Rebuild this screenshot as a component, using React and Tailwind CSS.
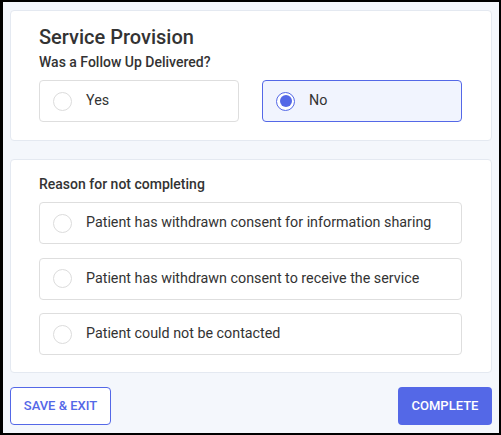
import React from "react";

function Radio({ checked }) {
  return checked ? (
    <span className="flex h-[19px] w-[19px] shrink-0 items-center justify-center rounded-full border-[1.5px] border-[#5468e7] bg-white">
      <span className="h-[12px] w-[12px] rounded-full bg-[#5468e7]" />
    </span>
  ) : (
    <span className="h-[19px] w-[19px] shrink-0 rounded-full border-[1.5px] border-[#dcdcdc] bg-white" />
  );
}

function Option({ label, checked }) {
  return (
    <div
      className={
        "flex h-[42px] items-center gap-[14px] rounded-[4px] border pl-[13px] " +
        (checked ? "border-[#5468e7] bg-[#f1f4fe]" : "border-[#dedede] bg-white")
      }
    >
      <Radio checked={checked} />
      <span className="text-[14.3px] text-[#333333]">{label}</span>
    </div>
  );
}

export default function App() {
  return (
    <div
      className="box-border h-[435px] w-[501px] border-[2px] border-l-[3px] border-black bg-[#f4f7fc] px-[7px] pt-[8px]"
      style={{ fontFamily: "Roboto, 'Liberation Sans', sans-serif" }}
    >
      <div className="rounded-[4px] border border-[#e4e9f1] bg-white pl-[28px] pr-[29px] pt-[12px] pb-[18px]">
        <h1 className="text-[20px] leading-[28px] font-medium text-[#333333]">Service Provision</h1>
        <p className="mt-[2px] text-[14px] leading-[18px] font-medium text-[#333333]">Was a Follow Up Delivered?</p>
        <div className="mt-[9px] grid grid-cols-2 gap-[23px]">
          <Option label="Yes" />
          <Option label="No" checked />
        </div>
      </div>
      <div className="mt-[18px] rounded-[4px] border border-[#e4e9f1] bg-white pl-[28px] pr-[29px] pt-[15px] pb-[17px]">
        <p className="text-[14px] leading-[18px] font-medium text-[#333333]">Reason for not completing</p>
        <div className="mt-[9px] flex flex-col gap-[13.5px]">
          <Option label="Patient has withdrawn consent for information sharing" />
          <Option label="Patient has withdrawn consent to receive the service" />
          <Option label="Patient could not be contacted" />
        </div>
      </div>
      <div className="mt-[14px] flex justify-between">
        <button className="h-[38px] w-[101px] rounded-[4px] border border-[#5468e7] bg-white text-[13px] font-medium text-[#5468e7]">
          SAVE &amp; EXIT
        </button>
        <button className="h-[38px] w-[94px] rounded-[4px] bg-[#5468e7] text-[13px] font-medium text-white">
          COMPLETE
        </button>
      </div>
    </div>
  );
}
